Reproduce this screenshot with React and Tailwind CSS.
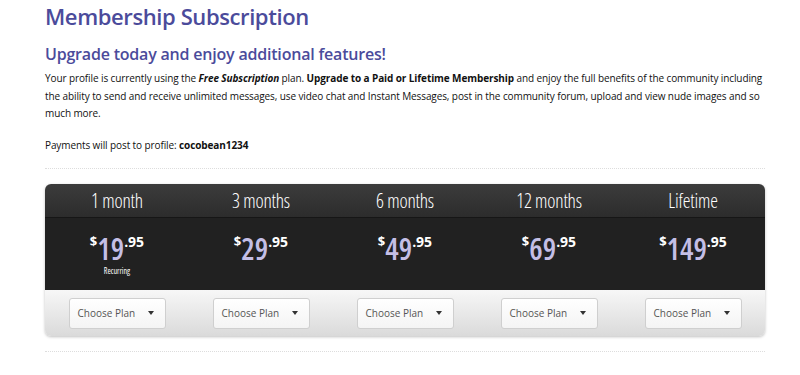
import React from "react";

const plans = [
  { label: "1 month", dollars: "19", recurring: true },
  { label: "3 months", dollars: "29" },
  { label: "6 months", dollars: "49" },
  { label: "12 months", dollars: "69" },
  { label: "Lifetime", dollars: "149" },
];

export default function App() {
  return (
    <div className="w-[800px] h-[375px] bg-white overflow-hidden" style={{ fontFamily: '"Open Sans", sans-serif' }}>
      <div className="pl-[45px] pr-[35px]">
        <h1 className="text-[22px] leading-[30px] text-[#4b4b9b] font-semibold tracking-[-0.4px] pt-[1px]">Membership Subscription</h1>
        <h2 className="text-[16px] leading-[22px] text-[#4b4b9b] font-semibold mt-[12px] tracking-[-0.2px]">Upgrade today and enjoy additional features!</h2>
        <p className="text-[10px] leading-[17.5px] text-[#111] mt-[5px] tracking-[-0.1px]">
          Your profile is currently using the <b><i>Free Subscription</i></b> plan. <b>Upgrade to a Paid or Lifetime Membership</b> and enjoy the full benefits of the community including the ability to send and receive unlimited messages, use video chat and Instant Messages, post in the community forum, upload and view nude images and so much more.
        </p>
        <p className="text-[10px] leading-[17.5px] text-[#111] mt-[14px] tracking-[-0.1px]">
          Payments will post to profile: <b>cocobean1234</b>
        </p>
        <div className="mt-[14px] border-t border-dotted border-[#ddd]" />
        <div className="mt-[15px] rounded-[6px] shadow-[0_1px_3px_rgba(0,0,0,0.25)] overflow-hidden">
          <div className="grid grid-cols-5 bg-gradient-to-b from-[#3c3c3c] to-[#2c2c2c] border-b border-[#161616] h-[34px]">
            {plans.map((p) => (
              <div key={p.label} className="flex items-center justify-center text-white text-[19.5px] tracking-[-0.2px]" style={{ fontStretch: "condensed", fontWeight: 300 }}>
                {p.label}
              </div>
            ))}
          </div>
          <div className="grid grid-cols-5 bg-[#212121] h-[72px]">
            {plans.map((p) => (
              <div key={p.label} className="flex flex-col items-center pt-[14px]">
                <div className="flex items-start leading-none">
                  <span className="text-white text-[13px] font-bold mt-[3px]">$</span>
                  <span className="text-[#c4bfe6] text-[30px] font-semibold leading-[34px]" style={{ fontStretch: "condensed" }}>{p.dollars}</span>
                  <span className="text-white text-[14px] font-bold mt-[3px]">.95</span>
                </div>
                {p.recurring && (
                  <span className="text-white text-[8px] -mt-[1px]" style={{ fontStretch: "condensed" }}>Recurring</span>
                )}
              </div>
            ))}
          </div>
          <div className="grid grid-cols-5 bg-gradient-to-b from-[#f7f7f7] to-[#dadada] h-[46px]">
            {plans.map((p) => (
              <div key={p.label} className="flex items-center justify-center">
                <div className="w-[97px] h-[31px] bg-gradient-to-b from-white to-[#f4f4f4] border border-[#cfcfcf] rounded-[3px] flex items-center pl-[8px] pr-[11px] justify-between">
                  <span className="text-[10px] text-[#555]">Choose Plan</span>
                  <span className="w-0 h-0 border-l-[3px] border-r-[3px] border-t-[4px] border-l-transparent border-r-transparent border-t-[#333]" />
                </div>
              </div>
            ))}
          </div>
        </div>
        <div className="mt-[15px] border-t border-dotted border-[#ddd]" />
      </div>
    </div>
  );
}
